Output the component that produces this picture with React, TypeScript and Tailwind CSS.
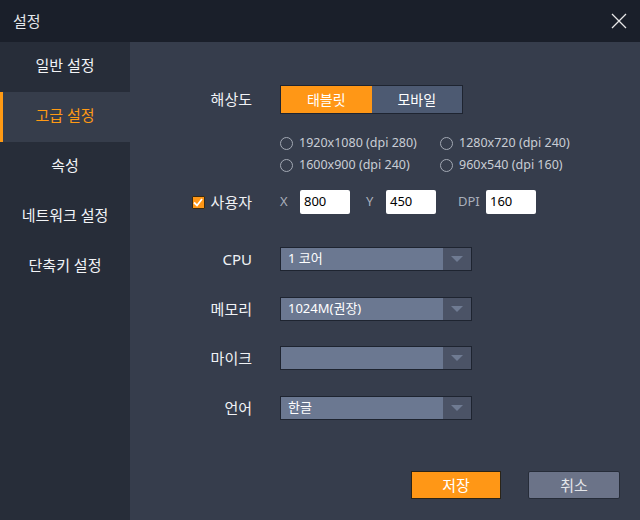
import { useState } from "react";

const menu = ["일반 설정", "고급 설정", "속성", "네트워크 설정", "단축키 설정"];

const resolutions = [
  "1920x1080 (dpi 280)",
  "1280x720 (dpi 240)",
  "1600x900 (dpi 240)",
  "960x540 (dpi 160)"
];

function Label(props: { children: React.ReactNode }) {
  return (
    <div className="flex w-[122px] shrink-0 items-center justify-end text-[15px] text-[#f0f2f5]">
      {props.children}
    </div>
  );
}

function Dropdown(props: { value: string }) {
  return (
    <div className="ml-[28px] flex h-[24px] w-[192px] border border-[#1e2430] bg-[#6b7891]">
      <div className="flex flex-1 items-center pl-[7px] text-[13px] text-white">
        {props.value}
      </div>
      <div className="flex w-[28px] items-center justify-center bg-[#4b5366]">
        <svg width="12" height="6" viewBox="0 0 12 6">
          <polygon points="0,0 12,0 6,6" fill="#6f7b92" />
        </svg>
      </div>
    </div>
  );
}

function NumInput(props: { value: string }) {
  return (
    <div className="flex h-[24px] w-[50px] items-center rounded-[2px] bg-white pl-[4px] text-[13px] text-black">
      {props.value}
    </div>
  );
}

export default function App() {
  const [active, setActive] = useState(1);
  const [mode, setMode] = useState(0);

  return (
    <div
      className="flex h-[520px] w-[640px] flex-col overflow-hidden"
      style={{ fontFamily: '"Noto Sans", "Noto Sans CJK KR", sans-serif' }}
    >
      <div className="flex h-[42px] shrink-0 items-center justify-between bg-[#1a1f2a] pl-[13px] pr-[13px]">
        <span className="text-[15px] text-[#e4e7eb]">설정</span>
        <svg width="16" height="16" viewBox="0 0 16 16">
          <path d="M1 1 L15 15 M15 1 L1 15" stroke="#e8e8e8" strokeWidth="1.3" />
        </svg>
      </div>

      <div className="flex flex-1">
        <div className="flex w-[130px] shrink-0 flex-col bg-[#272d39]">
          {menu.map((m, i) => (
            <div
              key={m}
              onClick={() => setActive(i)}
              className={
                i === active
                  ? "flex h-[50px] items-center justify-center border-l-[3px] border-[#ff9a14] bg-[#363d4b] pb-[3px] pr-[3px] text-[15px] text-[#ff9a14]"
                  : "flex h-[50px] items-center justify-center pb-[3px] text-[15px] text-[#f2f4f7]"
              }
            >
              {m}
            </div>
          ))}
        </div>

        <div className="flex flex-1 flex-col bg-[#363d4c] pt-[43px]">
          <div className="flex h-[29px] items-center">
            <Label>해상도</Label>
            <div className="ml-[28px] flex h-[29px] w-[183px] border border-[#1e2430]">
              {["태블릿", "모바일"].map((t, i) => (
                <div
                  key={t}
                  onClick={() => setMode(i)}
                  className={
                    i === mode
                      ? "flex flex-1 items-center justify-center bg-[#ff9716] text-[14px] text-white"
                      : "flex flex-1 items-center justify-center bg-[#4d5a72] text-[14px] text-white"
                  }
                >
                  {t}
                </div>
              ))}
            </div>
          </div>

          <div className="ml-[150px] mt-[18px] grid w-[330px] grid-cols-[160px_1fr]">
            {resolutions.map((r) => (
              <div key={r} className="flex h-[22px] items-center gap-[6px]">
                <span className="h-[13px] w-[13px] rounded-full border-[1.5px] border-[#a3a9b4]" />
                <span className="text-[12.5px] text-[#c9cdd5]">{r}</span>
              </div>
            ))}
          </div>

          <div className="mt-[14px] flex h-[24px] items-center">
            <Label>
              <span className="mr-[6px] flex h-[13px] w-[13px] items-center justify-center rounded-[1px] border border-[#3a2a10] bg-[#ff9716]">
                <svg width="10" height="9" viewBox="0 0 10 9">
                  <path d="M1 4.5 L4 7.5 L9 1" fill="none" stroke="#ffffff" strokeWidth="1.8" />
                </svg>
              </span>
              사용자
            </Label>
            <span className="ml-[28px] w-[20px] text-[13px] text-[#a9afbb]">X</span>
            <NumInput value="800" />
            <span className="ml-[16px] w-[20px] text-[13px] text-[#a9afbb]">Y</span>
            <NumInput value="450" />
            <span className="ml-[22px] w-[28px] text-[13px] text-[#a9afbb]">DPI</span>
            <NumInput value="160" />
          </div>

          <div className="mt-[33px] flex items-center">
            <Label>CPU</Label>
            <Dropdown value="1 코어" />
          </div>
          <div className="mt-[26px] flex items-center">
            <Label>메모리</Label>
            <Dropdown value="1024M(권장)" />
          </div>
          <div className="mt-[25px] flex items-center">
            <Label>마이크</Label>
            <Dropdown value="" />
          </div>
          <div className="mt-[26px] flex items-center">
            <Label>언어</Label>
            <Dropdown value="한글" />
          </div>

          <div className="mt-auto flex justify-end gap-[27px] pb-[21px] pr-[20px]">
            <button className="h-[28px] w-[90px] border border-[#2a2418] bg-[#ff9716] text-[15px] text-white">
              저장
            </button>
            <button className="h-[28px] w-[92px] rounded-[2px] border border-[#262c38] bg-[#6b7388] text-[15px] text-[#e4e6ea]">
              취소
            </button>
          </div>
        </div>
      </div>
    </div>
  );
}
